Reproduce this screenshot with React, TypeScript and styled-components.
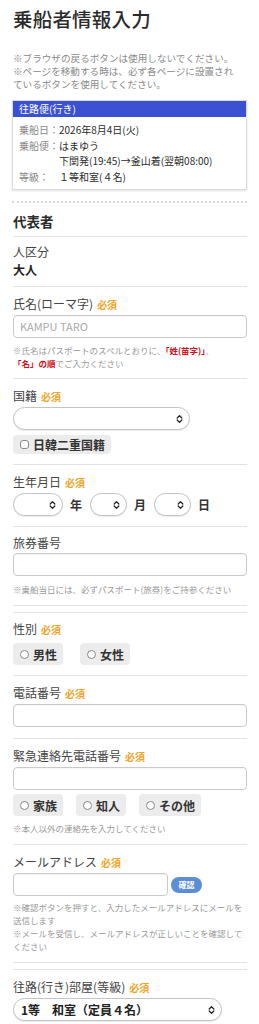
import React from "react";
import styled, { createGlobalStyle } from "styled-components";

const Global = createGlobalStyle`
  html, body { margin: 0; padding: 0; background: #fff; }
  body {
    font-family: "Noto Sans CJK JP", "Noto Sans", sans-serif;
    color: #333;
    -webkit-font-smoothing: antialiased;
  }
`;

const Page = styled.div`
  width: 259px;
  box-sizing: border-box;
  padding: 6px 12px 0 13px;
`;

const Title = styled.h1`
  margin: 0;
  font-size: 19.5px;
  line-height: 26px;
  font-weight: 500;
  color: #2b2b2b;
  letter-spacing: 0.2px;
`;

const TopNote = styled.p`
  margin: 20px 0 0;
  font-size: 9.6px;
  line-height: 13px;
  color: #8a8a8a;
  white-space: nowrap;
`;

const Box = styled.div`
  margin: 9px 0 0 -1px;
  border: 1px solid #dcdcdc;
  box-shadow: 0 1px 2px rgba(0, 0, 0, 0.12);
  background: #fff;
`;

const BoxHeader = styled.div`
  background: #3c50d2;
  color: #fff;
  font-size: 10px;
  line-height: 16px;
  height: 16px;
  padding-left: 6px;
`;

const BoxBody = styled.div`
  display: grid;
  grid-template-columns: 40px auto;
  padding: 5px 6px 5px 6px;
  font-size: 10px;
  line-height: 15.5px;
`;

const BoxKey = styled.div`
  color: #888;
  white-space: nowrap;
`;

const BoxVal = styled.div`
  color: #2b2b2b;
  white-space: nowrap;
`;

const Dotted = styled.div`
  margin: 11px 0 0 -1px;
  border-top: 2px dotted #d6d6d6;
`;

const SectionHead = styled.h2`
  margin: 8px 0 0;
  font-size: 13.5px;
  line-height: 20px;
  font-weight: 700;
  color: #2b2b2b;
`;

const Field = styled.div<{ $pt?: number; $pb?: number }>`
  border-top: 1px solid #e3e3e3;
  padding-top: ${(p) => p.$pt ?? 8}px;
  padding-bottom: ${(p) => p.$pb ?? 9}px;
`;

const DoubleGap = styled.div`
  height: 6px;
  border-top: 1px solid #e3e3e3;
`;

const Label = styled.div`
  font-size: 12px;
  line-height: 18px;
  color: #444;
  white-space: nowrap;
`;

const Value = styled.div`
  font-size: 12px;
  line-height: 18px;
  font-weight: 700;
  color: #222;
`;

const Req = styled.span`
  color: #f2a428;
  font-size: 10px;
  font-weight: 700;
  margin-left: 4px;
`;

const TextInput = styled.div<{ $w?: number }>`
  box-sizing: border-box;
  width: ${(p) => (p.$w ? `${p.$w}px` : "100%")};
  height: 23px;
  margin-top: 1px;
  border: 1px solid #c9c9c9;
  border-radius: 4px;
  background: #fff;
  box-shadow: inset 0 1px 1px rgba(0, 0, 0, 0.04);
  font-size: 11px;
  line-height: 21px;
  padding-left: 6px;
  color: #aaa;
`;

const SelectBox = styled.div<{ $w: number }>`
  box-sizing: border-box;
  width: ${(p) => p.$w}px;
  height: 23px;
  border: 1px solid #c4c4c4;
  border-radius: 12px;
  background: #fff;
  box-shadow: 0 1px 1px rgba(0, 0, 0, 0.08);
  display: flex;
  align-items: center;
  justify-content: space-between;
  padding: 0 6px 0 7px;
  font-size: 12px;
  font-weight: 700;
  color: #222;
  flex-shrink: 0;
`;

const SelectRow = styled.div`
  margin-top: 1px;
  display: flex;
  align-items: center;
`;

const Unit = styled.span`
  font-size: 12px;
  font-weight: 700;
  color: #333;
  margin: 0 8px 0 7px;
`;

const ChoiceRow = styled.div<{ $gap: number; $mt: number }>`
  display: flex;
  gap: ${(p) => p.$gap}px;
  margin-top: ${(p) => p.$mt}px;
`;

const Choice = styled.div<{ $h: number }>`
  display: inline-flex;
  align-items: center;
  height: ${(p) => p.$h}px;
  padding: 0 6px 0 7px;
  background: #ececec;
  border-radius: 4px;
  font-size: 12px;
  font-weight: 700;
  color: #333;
  white-space: nowrap;
`;

const Mark = styled.span<{ $square?: boolean }>`
  box-sizing: border-box;
  width: 9px;
  height: 9px;
  border: 1px solid #8a8a8a;
  border-radius: ${(p) => (p.$square ? "3px" : "50%")};
  background: #fff;
  margin-right: 4px;
  flex-shrink: 0;
`;

const Note = styled.div<{ $mt?: number }>`
  margin-top: ${(p) => p.$mt ?? 6}px;
  font-size: 8.5px;
  line-height: 13px;
  color: #999;
  white-space: nowrap;
`;

const Red = styled.span`
  color: #d0101a;
  font-weight: 700;
`;

const InlineRow = styled.div`
  margin-top: 1px;
  display: flex;
  align-items: center;
  gap: 3px;
`;

const ConfirmBtn = styled.button`
  height: 16px;
  width: 31px;
  border: none;
  border-radius: 8px;
  background: #5b8ed3;
  color: #fff;
  font-family: inherit;
  font-size: 8px;
  font-weight: 700;
  padding: 0;
  line-height: 16px;
`;

const Chevron = () => (
  <svg width="7" height="10" viewBox="0 0 7 10">
    <path
      d="M1.2 4 L3.5 1.6 L5.8 4 M1.2 6 L3.5 8.4 L5.8 6"
      stroke="#222"
      strokeWidth="1.3"
      fill="none"
      strokeLinecap="round"
      strokeLinejoin="round"
    />
  </svg>
);

const Select = ({ w, children }: { w: number; children?: React.ReactNode }) => (
  <SelectBox $w={w}>
    <span>{children}</span>
    <Chevron />
  </SelectBox>
);

export default function App() {
  return (
    <>
      <Global />
      <Page>
        <Title>乗船者情報入力</Title>
        <TopNote>
          ※ブラウザの戻るボタンは使用しないでください。
          <br />
          ※ページを移動する時は、必ず各ページに設置され
          <br />
          ているボタンを使用してください。
        </TopNote>

        <Box>
          <BoxHeader>往路便(行き)</BoxHeader>
          <BoxBody>
            <BoxKey>乗船日：</BoxKey>
            <BoxVal>2026年8月4日(火)</BoxVal>
            <BoxKey>乗船便：</BoxKey>
            <BoxVal>はまゆう</BoxVal>
            <BoxKey></BoxKey>
            <BoxVal>下関発(19:45)→釜山着(翌朝08:00)</BoxVal>
            <BoxKey>等級：</BoxKey>
            <BoxVal>１等和室(４名)</BoxVal>
          </BoxBody>
        </Box>

        <Dotted />
        <SectionHead>代表者</SectionHead>

        <Field $pt={6} $pb={7} style={{ marginTop: 5 }}>
          <Label>人区分</Label>
          <Value>大人</Value>
        </Field>

        <Field $pt={8} $pb={8}>
          <Label>
            氏名(ローマ字)<Req>必須</Req>
          </Label>
          <TextInput>KAMPU TARO</TextInput>
          <Note $mt={6}>
            ※氏名はパスポートのスペルとおりに、<Red>「姓(苗字)」</Red>、
            <br />
            <Red>「名」の順</Red>でご入力ください
          </Note>
        </Field>

        <Field $pt={8} $pb={10}>
          <Label>
            国籍<Req>必須</Req>
          </Label>
          <SelectRow>
            <Select w={177} />
          </SelectRow>
          <ChoiceRow $gap={0} $mt={5}>
            <Choice $h={19}>
              <Mark $square />
              日韓二重国籍
            </Choice>
          </ChoiceRow>
        </Field>

        <Field $pt={8} $pb={10}>
          <Label>
            生年月日<Req>必須</Req>
          </Label>
          <SelectRow>
            <Select w={50} />
            <Unit>年</Unit>
            <Select w={37} />
            <Unit>月</Unit>
            <Select w={37} />
            <Unit>日</Unit>
          </SelectRow>
        </Field>

        <Field $pt={7} $pb={9}>
          <Label>旅券番号</Label>
          <TextInput />
          <Note $mt={7}>※乗船当日には、必ずパスポート(旅券)をご持参ください</Note>
        </Field>
        <DoubleGap />

        <Field $pt={7} $pb={10}>
          <Label>
            性別<Req>必須</Req>
          </Label>
          <ChoiceRow $gap={17} $mt={4}>
            <Choice $h={22}>
              <Mark />
              男性
            </Choice>
            <Choice $h={22}>
              <Mark />
              女性
            </Choice>
          </ChoiceRow>
        </Field>

        <Field $pt={8} $pb={11}>
          <Label>
            電話番号<Req>必須</Req>
          </Label>
          <TextInput />
        </Field>

        <Field $pt={8} $pb={9}>
          <Label>
            緊急連絡先電話番号<Req>必須</Req>
          </Label>
          <TextInput />
          <ChoiceRow $gap={13} $mt={4}>
            <Choice $h={22}>
              <Mark />
              家族
            </Choice>
            <Choice $h={22}>
              <Mark />
              知人
            </Choice>
            <Choice $h={22}>
              <Mark />
              その他
            </Choice>
          </ChoiceRow>
          <Note $mt={6}>※本人以外の連絡先を入力してください</Note>
        </Field>

        <Field $pt={8} $pb={9}>
          <Label>
            メールアドレス<Req>必須</Req>
          </Label>
          <InlineRow>
            <TextInput $w={155} style={{ marginTop: 0 }} />
            <ConfirmBtn>確認</ConfirmBtn>
          </InlineRow>
          <Note $mt={5}>
            ※確認ボタンを押すと、入力したメールアドレスにメールを
            <br />
            送信します
            <br />
            ※メールを受信し、メールアドレスが正しいことを確認して
            <br />
            ください
          </Note>
        </Field>
        <DoubleGap />

        <Field $pt={8} $pb={10}>
          <Label>
            往路(行き)部屋(等級)<Req>必須</Req>
          </Label>
          <SelectRow>
            <Select w={209}>1等　和室（定員４名）</Select>
          </SelectRow>
        </Field>
      </Page>
    </>
  );
}
